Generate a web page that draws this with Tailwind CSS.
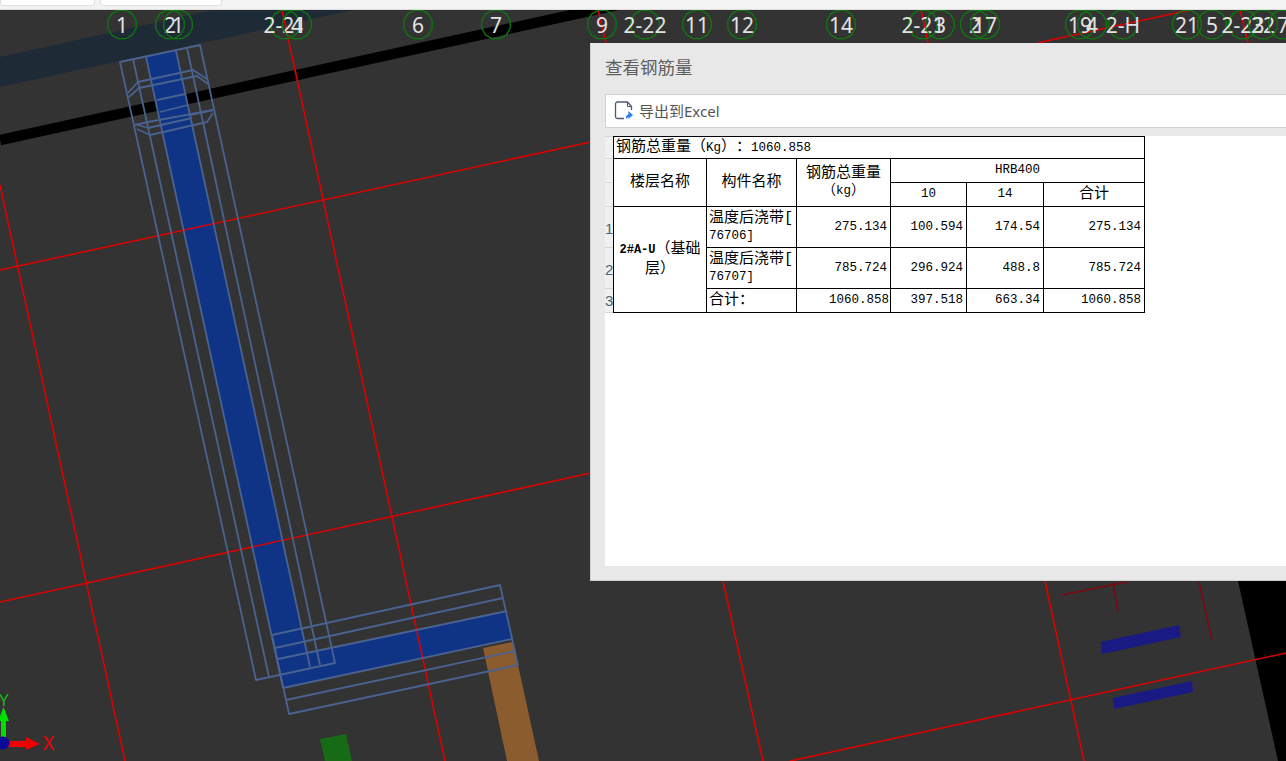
<!DOCTYPE html>
<html lang="zh-CN">
<head>
    <meta charset="UTF-8">
    <meta name="viewport" content="width=device-width, initial-scale=1.0">
    <title>查看钢筋量</title>
    <script src="https://cdn.jsdelivr.net/npm/@tailwindcss/browser@4"></script>
</head>
<body class="bg-[#333333] font-['Noto_Sans','Noto_Sans_CJK_SC',sans-serif]">
    <div class="relative w-[1286px] h-[761px] overflow-hidden">
        <!-- 顶部标签条 -->
        <div class="flex h-[10px] gap-[5px] bg-[#f3f3f3] border-b border-[#dcdcdc]">
            <div class="w-[95px] h-[6px] bg-white border border-t-0 border-[#e0e0e0] rounded-b"></div>
            <div class="w-[122px] h-[6px] bg-white border border-t-0 border-[#e0e0e0] rounded-b"></div>
        </div>

        <!-- 三维视图 -->
        <svg id="scene" class="block" width="1286" height="751" viewBox="0 10 1286 751" fill="none">
            <polygon points="0,57 213,10 353,10 0,87" fill="#1e2a36"/>
            <line x1="0" y1="140" x2="640" y2="0" stroke="#000" stroke-width="10.5"/>
            <polygon points="1238,581 1278,761 1286,761 1286,581" fill="#000"/>

            <polygon points="320,739 346,734 352,761 325,761" fill="#176b17"/>
            <polygon points="483,648 513,642 539,761 507,761" fill="#8a5c2e"/>
            <polygon points="1101,642 1179,625 1181,637 1102,654" fill="#1a1a85"/>
            <polygon points="1113,698 1192,681 1193,692 1114,709" fill="#1a1a85"/>

            <!-- 后浇带 -->
            <polygon points="146,57 176,51 307,653 507,611 512,639 283,688" fill="#0f3486"/>

            <!-- 轴网 -->
            <g stroke="#dc0000" stroke-width="1.6">
                <line x1="282" y1="10" x2="445" y2="761"/>
                <line x1="0" y1="270" x2="600" y2="140"/>
                <line x1="0" y1="602" x2="600" y2="471"/>
                <line x1="0" y1="185" x2="125" y2="761"/>
                <line x1="598" y1="10" x2="606" y2="43"/>
                <line x1="921" y1="10" x2="928" y2="43"/>
                <line x1="1240" y1="10" x2="1248" y2="43"/>
                <line x1="1037" y1="43" x2="1190" y2="10"/>
                <line x1="723" y1="581" x2="763" y2="761"/>
                <line x1="1045" y1="581" x2="1084" y2="761"/>
                <line x1="790" y1="761" x2="1286" y2="653"/>
            </g>
            <g stroke="#7a0a10" stroke-width="1.6">
                <line x1="1062" y1="595" x2="1127" y2="582"/>
                <line x1="1113" y1="583" x2="1118" y2="612"/>
                <line x1="1199" y1="582" x2="1212" y2="640"/>
            </g>

            <!-- 线框 -->
            <g stroke="#4a628f" stroke-width="1.8" stroke-linejoin="round">
                <polygon points="120,62 200,45 335,663 256,680"/>
                <line x1="133" y1="59" x2="269" y2="677"/>
                <line x1="146" y1="57" x2="283" y2="688"/>
                <line x1="176" y1="51" x2="310" y2="667"/>
                <line x1="187" y1="48" x2="320" y2="665"/>

                <polygon points="272,635 500,585 518,665 289,714"/>
                <line x1="275" y1="648" x2="503" y2="598"/>
                <line x1="278" y1="659" x2="507" y2="611"/>
                <line x1="283" y1="688" x2="512" y2="639"/>
                <line x1="286" y1="700" x2="515" y2="651"/>

                <polyline points="128,93 138,82 193,70 207,79"/>
                <polyline points="129,97 139,88 197,76 208,84"/>
                <line x1="157" y1="100" x2="185" y2="94"/>
                <line x1="160" y1="112" x2="188" y2="105"/>
                <polyline points="190,115 213,110"/>
                <polyline points="135,125 148,122 213,110"/>
                <polyline points="137,129 150,135 207,122 213,113"/>
                <polyline points="135,124 148,128 192,118"/>
            </g>

            <!-- 坐标轴 -->
            <rect x="1" y="718" width="5" height="25" fill="#00e000"/>
            <polygon points="3.5,707 9,721 -2,721" fill="#00e000"/>
            <rect x="8" y="741" width="20" height="6" fill="#f00000"/>
            <polygon points="26,737 40,744 26,750" fill="#f00000"/>
            <circle cx="3" cy="743" r="6.5" fill="#0a0a9a"/>
            <text x="-1" y="706" fill="#1bb01b" font-size="17">Y</text>
            <text x="43" y="750" fill="#f00000" font-size="19">X</text>
        </svg>

        <!-- 查看钢筋量弹窗 -->
        <div class="absolute left-[590px] top-[43px] w-[696px] h-[538px] bg-[#e8e8e8] border-l border-b border-[#cfcfcf] pl-[14px] flex flex-col">
            <div class="h-[51px] flex items-center text-[17.5px] text-[#5f5f5f] pb-[2px]">查看钢筋量</div>
            <div class="h-[34px] flex items-center gap-[5px] bg-white border border-r-0 border-[#cdd0d4] pl-[8px] text-[15px] text-[#555555]">
                <svg width="20" height="20" viewBox="0 0 20 20" fill="none">
                    <path d="M10 17.5H3.5a2 2 0 0 1-2-2V3a2 2 0 0 1 2-2h10l4 4.5V9" stroke="#4d5a6b" stroke-width="1.3"/>
                    <path d="M13.5 1v4.5h4" stroke="#4d5a6b" stroke-width="1"/>
                    <path d="M12.5 17.5c0-2.5 1.5-3.5 3.5-3.5M15 11.5l3 2.5-3 2.5z" stroke="#2f7fe8" stroke-width="1.3" fill="#2f7fe8"/>
                </svg>
                <span>导出到Excel</span>
            </div>
            <div class="mt-[8px] flex-1 mb-[14px] bg-white flex items-start">
                <!-- 行号 -->
                <div class="w-[8px] bg-[#f0f0f0] border-t border-[#d8d8d8] text-[15px] leading-none text-[#4b6478] overflow-hidden font-['Liberation_Sans',sans-serif]">
                    <div class="h-[22px] border-b border-[#d8d8d8]"></div>
                    <div class="h-[24px] border-b border-[#d8d8d8]"></div>
                    <div class="h-[24px] border-b border-[#d8d8d8]"></div>
                    <div class="h-[41px] border-b border-[#d8d8d8] flex items-center pt-[3px]">1</div>
                    <div class="h-[41px] border-b border-[#d8d8d8] flex items-center pt-[3px]">2</div>
                    <div class="h-[24px] border-b border-[#d8d8d8] flex items-center">3</div>
                </div>
                <table class="table-fixed border-collapse w-[532px] text-black text-[12.5px] leading-[15px] [text-spacing-trim:space-all] font-['Liberation_Mono','Noto_Sans_CJK_SC',monospace]">
                    <colgroup>
                        <col class="w-[93px]">
                        <col class="w-[90px]">
                        <col class="w-[94px]">
                        <col class="w-[76px]">
                        <col class="w-[77px]">
                        <col class="w-[101px]">
                    </colgroup>
                    <tbody>
                        <tr class="h-[22px]">
                            <td colspan="6" class="border border-black px-[2px]"><span class="text-[15px]">钢筋总重量（</span>Kg<span class="text-[15px]">）：</span>1060.858</td>
                        </tr>
                        <tr class="h-[24px]">
                            <td rowspan="2" class="border border-black text-center text-[15px]">楼层名称</td>
                            <td rowspan="2" class="border border-black text-center text-[15px]">构件名称</td>
                            <td rowspan="2" class="border border-black text-center text-[15px] leading-[16px]">钢筋总重量<br><span class="text-[14px]">（</span><span class="text-[12.5px]">kg</span><span class="text-[14px]">）</span></td>
                            <td colspan="3" class="border border-black text-center">HRB400</td>
                        </tr>
                        <tr class="h-[24px]">
                            <td class="border border-black text-center">10</td>
                            <td class="border border-black text-center">14</td>
                            <td class="border border-black text-center text-[15px]">合计</td>
                        </tr>
                        <tr class="h-[41px]">
                            <td rowspan="3" class="border border-black text-center text-[15px] leading-[19px]"><span class="text-[12px] font-bold">2#A-U</span>（基础<br>层）</td>
                            <td class="border border-black px-[2px] text-[15px] leading-[17px]">温度后浇带[<br><span class="text-[12.5px]">76706]</span></td>
                            <td class="border border-black text-right pr-[3px]">275.134</td>
                            <td class="border border-black text-right pr-[3px]">100.594</td>
                            <td class="border border-black text-right pr-[3px]">174.54</td>
                            <td class="border border-black text-right pr-[3px]">275.134</td>
                        </tr>
                        <tr class="h-[41px]">
                            <td class="border border-black px-[2px] text-[15px] leading-[17px]">温度后浇带[<br><span class="text-[12.5px]">76707]</span></td>
                            <td class="border border-black text-right pr-[3px]">785.724</td>
                            <td class="border border-black text-right pr-[3px]">296.924</td>
                            <td class="border border-black text-right pr-[3px]">488.8</td>
                            <td class="border border-black text-right pr-[3px]">785.724</td>
                        </tr>
                        <tr class="h-[24px]">
                            <td class="border border-black px-[2px] text-[15px]">合计：</td>
                            <td class="border border-black text-right pr-[1px]">1060.858</td>
                            <td class="border border-black text-right pr-[3px]">397.518</td>
                            <td class="border border-black text-right pr-[3px]">663.34</td>
                            <td class="border border-black text-right pr-[3px]">1060.858</td>
                        </tr>
                    </tbody>
                </table>
            </div>
        </div>
    </div>

    <script>
        // 轴号：[文字, 圆心 x]
        const axisLabels = [
            ['1', 122], ['2', 170], ['1', 178], ['2-21', 285], ['4', 297], ['6', 418], ['7', 496],
            ['9', 602], ['2-22', 645], ['11', 697], ['12', 742], ['14', 841], ['2-21', 923], ['3', 940],
            ['2', 975], ['17', 985], ['19', 1080], ['4', 1092], ['2-H', 1123], ['21', 1187], ['5', 1212],
            ['2-23', 1243], ['22', 1263], ['7', 1283]
        ];
        const scene = document.getElementById('scene');
        const ns = 'http://www.w3.org/2000/svg';
        axisLabels.forEach(([label, cx]) => {
            const pts = [];
            for (let i = 0; i < 12; i++) {
                const a = (i + 0.5) * Math.PI / 6;
                pts.push((cx + 14.7 * Math.cos(a)).toFixed(1) + ',' + (24.5 + 14.7 * Math.sin(a)).toFixed(1));
            }
            const ring = document.createElementNS(ns, 'polygon');
            ring.setAttribute('points', pts.join(' '));
            ring.setAttribute('stroke', '#0e780e');
            ring.setAttribute('stroke-width', '1.3');
            scene.appendChild(ring);
            const text = document.createElementNS(ns, 'text');
            text.textContent = label;
            text.setAttribute('x', cx);
            text.setAttribute('y', 32.5);
            text.setAttribute('text-anchor', 'middle');
            text.setAttribute('fill', '#e2e2e2');
            text.setAttribute('font-size', '21');
            scene.appendChild(text);
        });
    </script>
</body>
</html>
